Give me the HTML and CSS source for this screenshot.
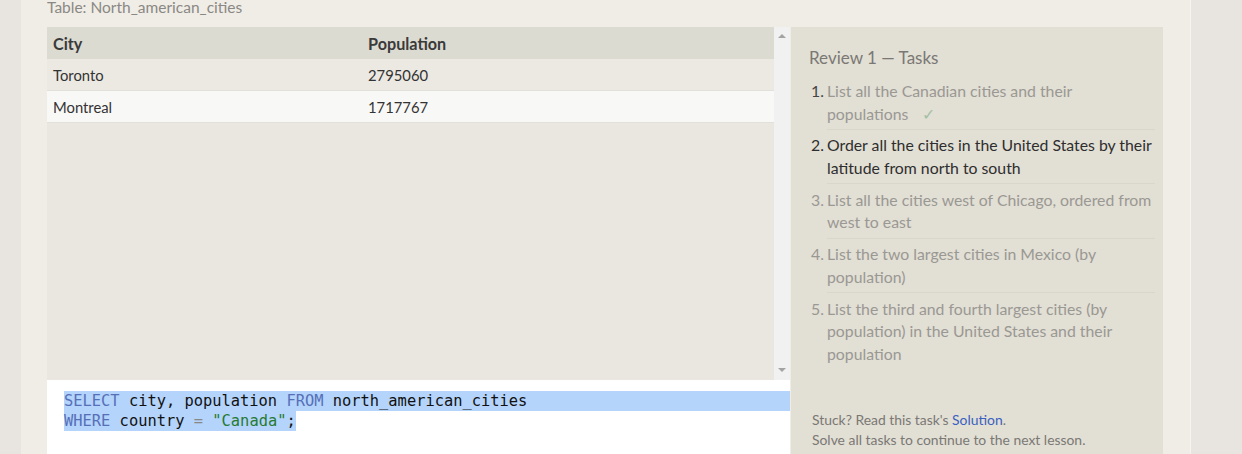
FILE: index.html
```html
<!DOCTYPE html>
<html>
<head>
<meta charset="utf-8">
<link rel="stylesheet" href="styles.css">
</head>
<body>
<div class="card">
  <div class="table-label">Table: North_american_cities</div>
  <div class="main">
    <div class="left">
      <div class="results">
        <div class="table-wrap">
          <table class="data">
            <thead>
              <tr><th class="c1">City</th><th>Population</th></tr>
            </thead>
            <tbody>
              <tr class="odd"><td class="c1">Toronto</td><td>2795060</td></tr>
              <tr class="even"><td class="c1">Montreal</td><td>1717767</td></tr>
            </tbody>
          </table>
        </div>
        <div class="scrollbar">
          <span class="arrow up"></span>
          <span class="arrow down"></span>
        </div>
      </div>
      <div class="editor">
        <div class="line l1"><span class="kw">SELECT</span> city, population <span class="kw">FROM</span> north_american_cities</div>
        <div class="line"><span class="sel"><span class="kw">WHERE</span> country <span class="op">=</span> <span class="str">"Canada"</span>;</span></div>
      </div>
    </div>
    <div class="panel">
      <div class="panel-title">Review 1 — Tasks</div>
      <ol class="tasks">
        <li class="task done"><span class="num">1.</span><div class="txt">List all the Canadian cities and their populations<span class="check">✓</span></div></li>
        <li class="task current"><span class="num">2.</span><div class="txt">Order all the cities in the United States by their latitude from north to south</div></li>
        <li class="task"><span class="num">3.</span><div class="txt">List all the cities west of Chicago, ordered from west to east</div></li>
        <li class="task"><span class="num">4.</span><div class="txt">List the two largest cities in Mexico (by population)</div></li>
        <li class="task last"><span class="num">5.</span><div class="txt">List the third and fourth largest cities (by population) in the United States and their population</div></li>
      </ol>
      <div class="footer">
        <div>Stuck? Read this task's <a class="sol">Solution</a>.</div>
        <div>Solve all tasks to continue to the next lesson.</div>
      </div>
    </div>
  </div>
</div>
</body>
</html>
```
FILE: styles.css
```css
html, body {
  margin: 0;
  padding: 0;
}
body {
  background: #e8e5e1;
  font-family: "Lato", "Open Sans", sans-serif;
  height: 454px;
  overflow: hidden;
}
.card {
  display: flow-root;
  margin-left: 21px;
  width: 1116px;
  padding: 0 27px 0 26px;
  background: #f0ede6;
  height: 454px;
  border-right: 1px solid #f6f4ef;
  overflow: hidden;
}
.table-label {
  font-size: 15.5px;
  line-height: 20px;
  color: #8a8884;
  margin-top: -3px;
  margin-bottom: 10px;
}
.main {
  display: flex;
  gap: 1px;
}
.left {
  width: 743px;
  display: flex;
  flex-direction: column;
}
.results {
  display: flex;
  height: 353px;
}
.table-wrap {
  flex: 1;
  background: #e9e7e0;
}
.data {
  width: 100%;
  border-collapse: collapse;
  font-size: 14.8px;
  color: #333;
}
.data th {
  text-align: left;
  background: #dcdbd1;
  height: 32px;
  padding: 0 6px;
  font-weight: 700;
  font-size: 16.2px;
  color: #3a3a3a;
}
.data .c1 { width: 303px; }
.data td {
  height: 31px;
  padding: 0 6px;
  border-bottom: 1px solid #e2e0da;
}
.data tr.odd td { background: #ebe9e2; }
.data tr.even td { background: #f8f8f7; }
.scrollbar {
  width: 16px;
  background: #f1f1f1;
  display: flex;
  flex-direction: column;
  justify-content: space-between;
  align-items: center;
  padding: 7px 0 8px;
}
.arrow {
  width: 0;
  height: 0;
  border-left: 4px solid transparent;
  border-right: 4px solid transparent;
}
.arrow.up { border-bottom: 4px solid #a3a3a3; }
.arrow.down { border-top: 4px solid #a3a3a3; }
.editor {
  background: #fff;
  flex: 1;
  padding-top: 11px;
  font-family: "DejaVu Sans Mono", monospace;
  font-size: 15.4px;
  line-height: 20px;
  color: #111;
}
.line {
  padding-left: 17px;
  white-space: pre;
}
.line.l1 {
  margin-left: 17px;
  padding-left: 0;
  background: #b4d4fb;
  height: 20px;
  line-height: 20px;
}
.sel { background: #b4d4fb; display: inline-block; line-height: 20px; }
.kw { color: #5670b8; }
.op { color: #888; }
.str { color: #267a32; }
.panel {
  width: 372px;
  background: #e2dfd5;
  padding: 19px 8px 0 18px;
  box-sizing: border-box;
  height: 440px;
}
.panel-title {
  font-size: 17px;
  line-height: 24px;
  color: #7a7874;
  margin-bottom: 10px;
}
.tasks {
  list-style: none;
  margin: 0;
  padding: 0;
}
.task {
  display: flex;
  font-size: 15.8px;
  line-height: 22.5px;
  color: #9a9893;
}
.task .num {
  width: 16px;
  padding-left: 2px;
  flex: none;
}
.task .txt {
  flex: 1;
  border-bottom: 1px solid #d9d6cc;
  padding-bottom: 4px;
  margin-bottom: 4.4px;
}
.task.last .txt { border-bottom: none; }
.task.done .num { color: #444; }
.task.current { color: #2e2e2e; }
.check {
  display: inline-block;
  color: #a4bfa4;
  margin-left: 14px;
}
.footer {
  margin-top: 37px;
  font-size: 13.9px;
  line-height: 20px;
  color: #7a7874;
  padding-left: 3px;
}
.sol { color: #3b5fc0; }
```
